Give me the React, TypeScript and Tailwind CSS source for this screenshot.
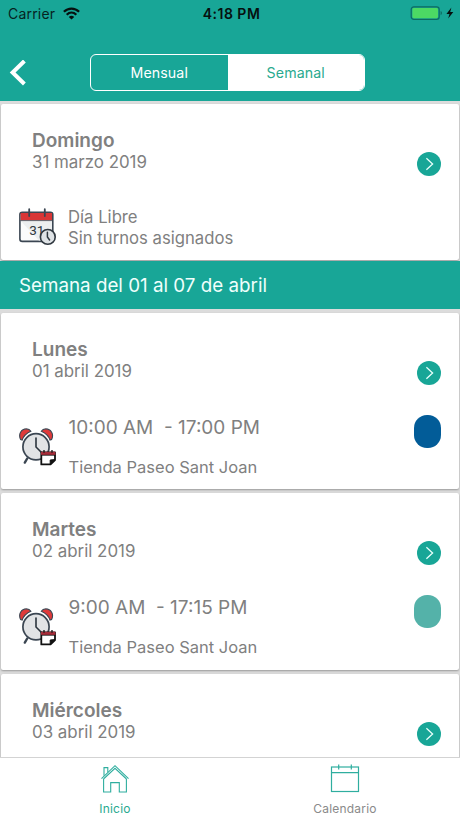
import React, { useState } from 'react';

type Shift = {
  day: string;
  date: string;
  hours?: string;
  place?: string;
  color?: string;
  dayOff?: boolean;
};

const sunday: Shift = { day: 'Domingo', date: '31 marzo 2019', dayOff: true };

const week: Shift[] = [
  { day: 'Lunes', date: '01 abril 2019', hours: '10:00 AM  - 17:00 PM', place: 'Tienda Paseo Sant Joan', color: 'bg-[#025c98]' },
  { day: 'Martes', date: '02 abril 2019', hours: '9:00 AM  - 17:15 PM', place: 'Tienda Paseo Sant Joan', color: 'bg-[#54b2a9]' },
  { day: 'Miércoles', date: '03 abril 2019' },
];

const DayOffIcon = () => (
  <svg width="38" height="38" viewBox="0 0 38 38" fill="none" className="mt-px shrink-0">
    <rect x="0.9" y="4.2" width="32.9" height="29.2" rx="2.4" fill="#fbfbfb" stroke="#3b4652" strokeWidth="1.6" />
    <path d="M1.7 13 L20 32.6 H33 V13 Z" fill="#eceeef" />
    <path d="M1.7 5 H33 V12.3 H1.7 Z" fill="#d93636" />
    <path d="M1.4 12.6 H33.6" stroke="#3b4652" strokeWidth="0.8" />
    <path d="M10.2 1.2 V8 M25.8 1.2 V8" stroke="#3b4652" strokeWidth="1.8" strokeLinecap="round" />
    <text x="10.2" y="27" fontSize="13.5" fontFamily="Roboto, sans-serif" fill="#303840">31</text>
    <circle cx="28.8" cy="28.9" r="7.4" fill="#dfe3e6" stroke="#303840" strokeWidth="1.6" />
    <path d="M28.4 24.2 V29 L30.6 32" stroke="#303840" strokeWidth="1.5" strokeLinecap="round" />
  </svg>
);

const AlarmIcon = () => (
  <svg width="38" height="38" viewBox="0 0 38 38" fill="none" className="shrink-0">
    <path d="M8.2 30.5 L5.8 34.6" stroke="#3b4652" strokeWidth="2.4" strokeLinecap="round" />
    <path d="M1.6 11.6 C-1 6.4 2.2 0.9 7.4 0.9 C9.3 0.9 11 1.8 11.9 3.3 C8 5 4.6 8 3.2 12 Z" fill="#df3a3a" stroke="#3b4652" strokeWidth="1.1" />
    <path d="M32.6 11.6 C35.2 6.4 32 0.9 26.8 0.9 C24.9 0.9 23.2 1.8 22.3 3.3 C26.2 5 29.6 8 31 12 Z" fill="#df3a3a" stroke="#3b4652" strokeWidth="1.1" />
    <circle cx="17" cy="18.8" r="13.1" fill="#e1e3e5" stroke="#3b4652" strokeWidth="1.7" />
    <path d="M17 10 V19 L23 25" stroke="#2b343d" strokeWidth="1.6" strokeLinecap="round" />
    <path d="M22.3 24.3 H36 V32.2 L31.6 36.4 H22.3 Z" fill="#fff" stroke="#111" strokeWidth="1.8" strokeLinejoin="round" />
    <path d="M22 23.8 H36.4 V27 H22 Z" fill="#a52c39" />
    <path d="M22 27.3 H36.4" stroke="#111" strokeWidth="0.8" />
    <path d="M25 22 V24.8 M33 22 V24.8" stroke="#111" strokeWidth="1.3" />
    <path d="M36 31.6 L31.2 36.4 V32 Z" fill="#111" stroke="#111" />
  </svg>
);

const StatusBar = () => (
  <div className="grid h-[26px] grid-cols-3 items-center pl-2 pr-1.5 text-[14px] text-[#06231f]">
    <div className="flex items-center gap-2">
      <span className="tracking-[0.2px]">Carrier</span>
      <svg width="17" height="13" viewBox="0 0 17 13" fill="none" stroke="#06100f" strokeWidth="2.2">
        <path d="M0.9 4.8 C5.2 0.5 11.8 0.5 16.1 4.8" />
        <path d="M3.7 7.7 C6.5 5 10.5 5 13.3 7.7" />
        <path d="M8.5 12.6 L5.8 9.9 C7.3 8.5 9.7 8.5 11.2 9.9 Z" fill="#06100f" stroke="none" />
      </svg>
    </div>
    <span className="whitespace-nowrap pl-px text-center font-semibold tracking-[0.5px] text-[#06100f]">4:18 PM</span>
    <svg width="44" height="14" viewBox="0 0 44 14" className="justify-self-end">
      <rect x="1.2" y="0.8" width="28" height="12.6" rx="2.6" fill="none" stroke="#0d6a60" strokeWidth="1.2" />
      <rect x="2.4" y="2" width="25.6" height="10.2" rx="1.4" fill="#4cd964" />
      <path d="M30.6 5 C32.4 5.6 32.4 8.6 30.6 9.2 Z" fill="#0d6a60" />
      <path d="M41.4 1.4 L36.4 8 H39.5 L38.2 12.6 L43.3 6 H40.2 Z" fill="#06100f" />
    </svg>
  </div>
);

const ShiftCard = ({ shift }: { shift: Shift }) => (
  <article className={`mx-px shrink-0 rounded-[2px] bg-white px-[18px] pt-[25px] shadow-[0_1px_2px_rgba(0,0,0,0.3)] ${shift.dayOff ? 'h-[156.5px]' : 'h-[176.7px]'}`}>
    <div className="flex justify-between pl-[13px]">
      <div className="text-[#808080]">
        <h2 className="text-[19px] font-semibold leading-[23px]">{shift.day}</h2>
        <p className="text-[16.9px] leading-[21px]">{shift.date}</p>
      </div>
      <button className="mt-[23px] flex size-6 items-center justify-center rounded-full bg-[#18a697]" aria-label={shift.day}>
        <svg width="24" height="24" viewBox="0 0 24 24" fill="none" stroke="#e8fffb" strokeWidth="1.3">
          <path d="M9.4 6.2 L15.6 12 L9.4 17.8" />
        </svg>
      </button>
    </div>
    {shift.hours && (
      <div className="flex pt-[30px] text-[#808080]">
        <div className="pt-[13px]">
          <AlarmIcon />
        </div>
        <div className="flex-1 pl-[11.5px]">
          <p className="whitespace-pre text-[19px] leading-[25px]">{shift.hours}</p>
          <p className="pt-[15px] text-[16.5px] leading-6">{shift.place}</p>
        </div>
        <span className={`h-[33px] w-[27px] rounded-[13px] ${shift.color}`} />
      </div>
    )}
    {shift.dayOff && (
      <div className="flex pt-[31px] text-[16.7px] leading-[21px] text-[#808080]">
        <DayOffIcon />
        <div className="pl-[11px]">
          <p>Día Libre</p>
          <p>Sin turnos asignados</p>
        </div>
      </div>
    )}
  </article>
);

const App = () => {
  const [view, setView] = useState('Semanal');

  return (
    <div className="flex h-[818px] w-[460px] flex-col overflow-hidden bg-[#dcdcdc] font-['Inter',sans-serif]">
      <header className="h-[100.5px] shrink-0 bg-[#18a697]">
        <StatusBar />
        <div className="flex pt-7">
          <button className="flex w-[90px] items-center pl-[9px]" aria-label="Volver">
            <svg width="18" height="26" viewBox="0 0 18 26" fill="none" stroke="#fff" strokeWidth="4">
              <path d="M15.4 1 L3.6 12.5 L15.4 24" />
            </svg>
          </button>
          <div className="flex h-[37px] w-[275px] overflow-hidden rounded-[6px] border border-white">
            {['Mensual', 'Semanal'].map((name) => (
              <button
                key={name}
                onClick={() => setView(name)}
                className={`flex-1 text-[14.2px] tracking-[0.1px] ${view === name ? 'bg-white text-[#2aaa8f]' : 'text-white'}`}
              >
                {name}
              </button>
            ))}
          </div>
        </div>
      </header>

      <main className="flex min-h-0 flex-1 flex-col overflow-hidden pt-[3px]">
        <ShiftCard shift={sunday} />
        <div className="z-10 mb-[3.5px] mt-px flex h-[48px] shrink-0 items-center bg-[#18a697] pl-[19px] pt-[3px] text-[18.8px] text-[#f0fffc]">
          Semana del 01 al 07 de abril
        </div>
        <div className="flex flex-col gap-1">
          {week.map((shift) => (
            <ShiftCard key={shift.day} shift={shift} />
          ))}
        </div>
      </main>

      <nav className="grid h-[61px] shrink-0 grid-cols-2 border-t border-[#d3d3d3] bg-white text-[12px]">
        <button className="flex flex-col items-center pt-[6px] text-[#2aaa8f]">
          <svg width="30" height="30" viewBox="0 0 30 30" fill="none" stroke="#2fae9f" strokeWidth="1.1">
            <path d="M1.5 14.6 L15 1.7 L28.5 14.6" />
            <path d="M3.5 15 L15 4.3 L26.5 15" />
            <path d="M4 11.8 V3.6 H7.8 V8.2" />
            <path d="M3.6 15 V28 H10.7 V18.6 H19.3 V28 H26.4 V15" />
          </svg>
          <span className="pt-1.5 leading-[18px] tracking-[0.2px]">Inicio</span>
        </button>
        <button className="flex flex-col items-center pt-[6px] text-[#8a8a8a]">
          <svg width="30" height="30" viewBox="0 0 30 30" fill="none" stroke="#2fae9f" strokeWidth="1.2">
            <rect x="1.5" y="3" width="27" height="24.5" />
            <path d="M1.5 8.7 H28.5 M8.7 0.5 V5.5 M21.3 0.5 V5.5" />
          </svg>
          <span className="pt-1.5 leading-[18px] tracking-[0.2px]">Calendario</span>
        </button>
      </nav>
    </div>
  );
};

export default App;
